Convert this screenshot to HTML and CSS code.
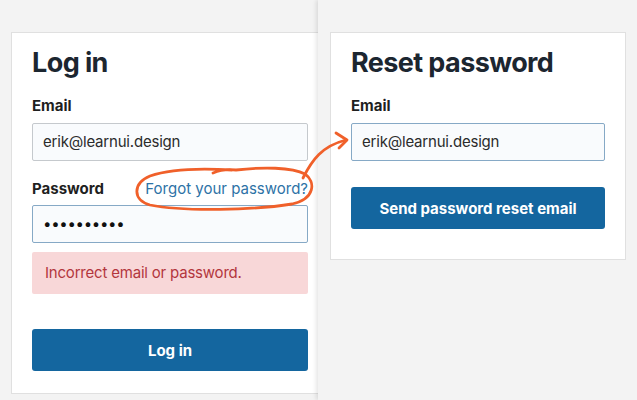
FILE: index.html
```html
<!DOCTYPE html>
<html>
<head>
<meta charset="utf-8">
<link rel="stylesheet" href="styles.css">
</head>
<body>
<div class="stage">
  <section class="pane pane-left">
    <div class="card card-login">
      <h1 class="title">Log in</h1>
      <label class="label">Email</label>
      <div class="input">erik@learnui.design</div>
      <div class="pw-row">
        <label class="label">Password</label>
        <a class="link">Forgot your password?</a>
      </div>
      <div class="input input-focus dots">••••••••••</div>
      <div class="error">Incorrect email or password.</div>
      <button class="btn btn-login">Log in</button>
    </div>
  </section>
  <section class="pane pane-right">
    <div class="card card-reset">
      <h1 class="title">Reset password</h1>
      <label class="label">Email</label>
      <div class="input input-focus">erik@learnui.design</div>
      <button class="btn btn-reset">Send password reset email</button>
    </div>
  </section>
  <svg class="annot" width="637" height="400" viewBox="0 0 637 400">
    <path d="M213 173 C220 170 228 169 236 170 C262 167 292 167 305 174 C316 182 315 199 292 204 C255 210 185 212 150 205 C132 200 133 183 150 176 C170 169 200 168 232 170" fill="none" stroke="#f0602a" stroke-width="2.8" stroke-linecap="round" stroke-linejoin="round"/>
    <path d="M303 178 C312 160 322 146 346 140" fill="none" stroke="#f0602a" stroke-width="2.8" stroke-linecap="round"/>
    <path d="M336 133 L347 140 L339 148" fill="none" stroke="#f0602a" stroke-width="2.8" stroke-linecap="round" stroke-linejoin="round"/>
  </svg>
</div>
</body>
</html>
```
FILE: styles.css
```css
* { box-sizing: border-box; }
html, body { margin: 0; padding: 0; }
body {
  width: 637px;
  height: 400px;
  overflow: hidden;
  background: #f3f3f3;
  font-family: Inter, "Noto Sans", sans-serif;
  color: #1d1d1f;
}
.stage {
  position: relative;
  display: flex;
  width: 637px;
  height: 400px;
}
.pane {
  height: 400px;
  padding-top: 32px;
}
.pane-left {
  width: 318px;
  flex: none;
  overflow: hidden;
  padding-left: 11px;
}
.pane-right {
  flex: 1;
  padding-left: 12px;
  background: #f3f3f3;
  box-shadow: -2px 0 4px rgba(0,0,0,0.10);
  z-index: 1;
}
.card {
  background: #fff;
  border: 1px solid #e0e0e0;
  padding: 13px 20px 20px;
  display: flex;
  flex-direction: column;
}
.card-login { width: 318px; height: 362px; }
.card-reset { width: 296px; padding-bottom: 30px; }
.title {
  margin: 0;
  font-size: 27px;
  line-height: 34px;
  font-weight: 700;
  color: #1c2630;
  letter-spacing: -0.6px;
}
.label {
  display: block;
  font-size: 15px;
  line-height: 20px;
  font-weight: 700;
  color: #1f1f1f;
}
.card > .label { margin-top: 16px; }
.input {
  margin-top: 7px;
  height: 38px;
  border: 1px solid #c5c9cd;
  border-radius: 2px;
  background: #f9fbfd;
  padding: 0 10px;
  font-size: 15px;
  letter-spacing: -0.2px;
  line-height: 36px;
  color: #2b2b2b;
}
.input-focus { border-color: #86a9c6; }
.dots { font-size: 15px; letter-spacing: -0.3px; color: #111; }
.pw-row {
  margin-top: 18px;
  display: flex;
  justify-content: space-between;
  align-items: baseline;
}
.pw-row + .input { margin-top: 6px; }
.link {
  font-size: 15px;
  color: #2d72a6;
  text-decoration: none;
}
.error {
  margin-top: 9px;
  height: 42px;
  background: #f8d7d8;
  border-radius: 2px;
  padding: 0 13px;
  font-size: 15px;
  letter-spacing: -0.2px;
  line-height: 42px;
  color: #b3363d;
}
.btn {
  height: 42px;
  border: none;
  border-radius: 3px;
  background: #14669f;
  color: #fff;
  font-family: Inter, "Noto Sans", sans-serif;
  font-size: 15px;
  font-weight: 700;
}
.btn-login { margin-top: 35px; }
.btn-reset { margin-top: 26px; }
.annot {
  position: absolute;
  left: 0;
  top: 0;
  z-index: 2;
  pointer-events: none;
}
```
